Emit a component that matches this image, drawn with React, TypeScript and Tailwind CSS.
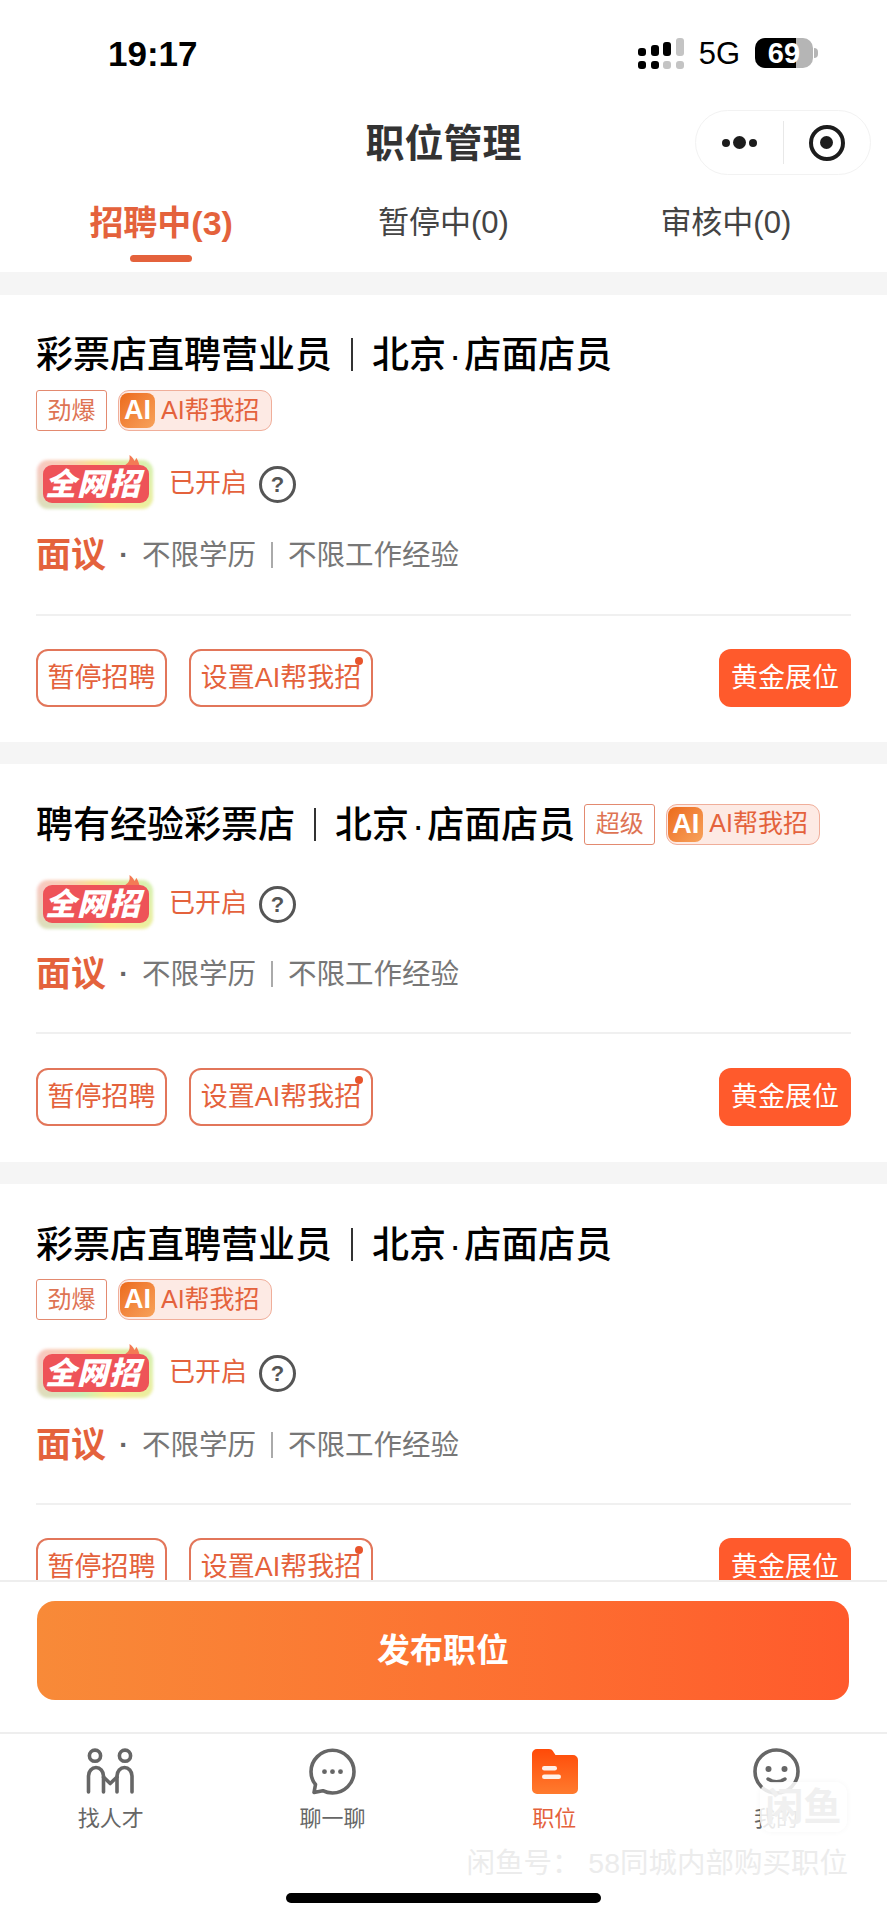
import React from 'react';

const Tag: React.FC<{ text: string }> = ({ text }) => (
    <span className="flex h-[41px] w-[71px] items-center justify-center rounded-[3px] border-[1.5px] border-[#e38a70] bg-white text-[24px] text-[#de7454]">{text}</span>
);

const AiTag: React.FC = () => (
    <span className="flex h-[41px] w-[154px] items-center rounded-[11px] border-[1.5px] border-[#f0ae9a] bg-[#fdeae4] pl-[1px]">
        <span className="flex h-[35px] w-[35px] items-center justify-center rounded-[8px] bg-gradient-to-br from-[#ec6a18] to-[#f7a25a] text-[27px] leading-none font-bold text-white">AI</span>
        <span className="ml-[6px] text-[25px] whitespace-nowrap text-[#e4623c]">AI帮我招</span>
    </span>
);

const QuanWang: React.FC = () => (
    <div className="relative h-[52px] w-[117px] shrink-0">
        <div className="absolute top-[5px] left-[1px] h-[49px] w-[116px] rounded-[11px] bg-[conic-gradient(#fbe08e,#d7f0b0,#fdec8f,#c9efb8,#f8c8c0,#fbe08e)] blur-[1.5px]"></div>
        <svg className="absolute top-0 left-[84px]" width="24" height="14" viewBox="0 0 24 14">
            <path d="M0 14C4 10 8 9 9 6c1-2 .5-4 .5-6 3 2 4 4 5 6 1-1 1-2 2-3 2 3 3 7 4 11z" fill="#f47a55" />
        </svg>
        <div className="absolute top-[10px] left-[7px] flex h-[38px] w-[106px] items-center justify-center rounded-[9px] bg-[#ee5358] pr-[6px] text-[31px] leading-none font-black tracking-[1px] text-white italic">全网招</div>
    </div>
);

const Help: React.FC = () => (
    <span className="mt-[7px] ml-[12px] flex h-[37px] w-[37px] items-center justify-center rounded-full border-[3px] border-[#555555] text-[22px] leading-none font-bold text-[#555555]">?</span>
);

type Job = {
    title: string;
    tag: string;
    inline: boolean;
    pad: string;
    tagGap: string;
    rowGap: string;
    salaryGap: string;
    lineGap: string;
    btnGap: string;
};

const jobs: Job[] = [
    { title: '彩票店直聘营业员', tag: '劲爆', inline: false, pad: 'pt-[37px] pb-[35px]', tagGap: 'mt-[14px]', rowGap: 'mt-[24px]', salaryGap: 'mt-[26px]', lineGap: 'mt-[37px]', btnGap: 'mt-[33px]' },
    { title: '聘有经验彩票店', tag: '超级', inline: true, pad: 'pt-[38px] pb-[36px]', tagGap: '', rowGap: 'mt-[29px]', salaryGap: 'mt-[25px]', lineGap: 'mt-[36px]', btnGap: 'mt-[34px]' },
    { title: '彩票店直聘营业员', tag: '劲爆', inline: false, pad: 'pt-[38px] pb-[35px]', tagGap: 'mt-[13px]', rowGap: 'mt-[24px]', salaryGap: 'mt-[27px]', lineGap: 'mt-[36px]', btnGap: 'mt-[33px]' },
];

const JobCard: React.FC<{ job: Job }> = ({ job }) => (
    <div className={`bg-white px-[36px] ${job.pad}`}>
        <div className="flex h-[44px] items-center">
            <span className="pt-[2px] text-[37px] leading-none font-medium whitespace-nowrap text-black">{job.title}</span>
            <span className="mx-[19px] h-[33px] w-[2px] bg-[#333333]"></span>
            <span className="pt-[2px] text-[37px] leading-none font-medium whitespace-nowrap text-black">北京<span className="mx-[3px]">·</span>店面店员</span>
            {job.inline && (
                <div className="ml-[9px] flex items-center gap-[11px]">
                    <Tag text={job.tag} />
                    <AiTag />
                </div>
            )}
        </div>
        {!job.inline && (
            <div className={`flex items-center gap-[11px] ${job.tagGap}`}>
                <Tag text={job.tag} />
                <AiTag />
            </div>
        )}
        <div className={`flex h-[52px] items-center ${job.rowGap}`}>
            <QuanWang />
            <span className="mt-[4px] ml-[16px] text-[26px] text-[#e4623c]">已开启</span>
            <Help />
        </div>
        <div className={`flex h-[44px] items-center ${job.salaryGap}`}>
            <span className="text-[35px] font-bold text-[#e4623c]">面议</span>
            <span className="w-[36px] text-center text-[28px] font-bold text-[#666666]">·</span>
            <span className="text-[28.5px] text-[#777777]">不限学历</span>
            <span className="mx-[15px] h-[26px] w-[2px] bg-[#aaaaaa]"></span>
            <span className="text-[28.5px] text-[#777777]">不限工作经验</span>
        </div>
        <div className={`h-[2px] bg-[#f0f0f0] ${job.lineGap}`}></div>
        <div className={`flex items-center justify-between ${job.btnGap}`}>
            <div className="flex gap-[22px]">
                <button className="flex h-[58px] w-[131px] items-center justify-center rounded-[12px] border-2 border-[#e2765a] text-[27px] whitespace-nowrap text-[#e4623c]">暂停招聘</button>
                <button className="relative flex h-[58px] w-[184px] items-center justify-center rounded-[12px] border-2 border-[#e2765a] text-[27px] whitespace-nowrap text-[#e4623c]">
                    设置AI帮我招
                    <span className="absolute top-[6px] right-[8px] h-[8px] w-[8px] rounded-full bg-[#e8542c]"></span>
                </button>
            </div>
            <button className="flex h-[58px] w-[132px] items-center justify-center rounded-[12px] bg-[#ff5a2c] text-[27px] whitespace-nowrap text-white">黄金展位</button>
        </div>
    </div>
);

const PeopleIcon = () => (
    <svg width="49" height="47" viewBox="0 0 49 47" fill="none" stroke="#666666" strokeWidth="3.6" strokeLinecap="round" strokeLinejoin="round">
        <circle cx="9" cy="7.7" r="5.6" />
        <circle cx="39" cy="7.7" r="5.6" />
        <path d="M2.500 44V28a7.500 8.500 0 0 1 15 0v16" />
        <path d="M31 44V28a7.500 8.500 0 0 1 15 0v16" />
        <path d="M17.500 29l6.700 6.500L31 29" />
    </svg>
);

const ChatIcon = () => (
    <svg width="47" height="47" viewBox="0 0 47 47" fill="none">
        <path d="M6.500 36.500C3.500 33 2 28.500 2 23.700 2 12 11.700 2.300 23.500 2.300S45 12 45 23.700 35.300 45 23.500 45c-3.500 0-6.800-.8-9.700-2.300L5 44.500z" stroke="#666666" strokeWidth="3.600" strokeLinejoin="round" />
        <circle cx="15.500" cy="23.700" r="2.400" fill="#666666" />
        <circle cx="23.500" cy="23.700" r="2.400" fill="#666666" />
        <circle cx="31.500" cy="23.700" r="2.400" fill="#666666" />
    </svg>
);

const FolderIcon = () => (
    <svg width="47" height="47" viewBox="0 0 47 47">
        <defs>
            <linearGradient id="folder" x1="0" y1="0" x2="0" y2="1">
                <stop offset="0" stopColor="#ff4a08" />
                <stop offset="1" stopColor="#ff7b2e" />
            </linearGradient>
        </defs>
        <path d="M1 6a5 5 0 0 1 5-5h12c2 0 3 .8 4 2.200l2.500 3.800h17.500a5 5 0 0 1 5 5v29a5 5 0 0 1-5 5H6a5 5 0 0 1-5-5z" fill="url(#folder)" />
        <rect x="11" y="18" width="15" height="4.500" rx="2.200" fill="#ffffff" fillOpacity="0.9" />
        <rect x="11" y="26.500" width="19" height="4.500" rx="2.200" fill="#ffffff" fillOpacity="0.9" />
    </svg>
);

const SmileIcon = () => (
    <svg width="47" height="47" viewBox="0 0 47 47" fill="none">
        <circle cx="23.500" cy="23.500" r="21.500" stroke="#666666" strokeWidth="3.600" />
        <circle cx="15.500" cy="21" r="3" fill="#666666" />
        <circle cx="31.500" cy="21" r="3" fill="#666666" />
        <path d="M15 31c5 3.500 12 3.500 17 0" stroke="#666666" strokeWidth="3.400" strokeLinecap="round" />
    </svg>
);

const Signal = () => (
    <svg width="46" height="31" viewBox="0 0 46 31">
        <rect x="0" y="10" width="8" height="8" rx="3" fill="#000000" />
        <rect x="13" y="7" width="8" height="11" rx="3" fill="#000000" />
        <rect x="25" y="4" width="8" height="14" rx="3" fill="#000000" />
        <rect x="38" y="0" width="8" height="18" rx="3" fill="#c4c4c4" />
        <rect x="0" y="23" width="8" height="8" rx="3" fill="#000000" />
        <rect x="13" y="23" width="8" height="8" rx="3" fill="#000000" />
        <rect x="25" y="23" width="8" height="8" rx="3" fill="#c4c4c4" />
        <rect x="38" y="23" width="8" height="8" rx="3" fill="#c4c4c4" />
    </svg>
);

const tabs = [
    { label: '找人才', icon: <PeopleIcon />, active: false },
    { label: '聊一聊', icon: <ChatIcon />, active: false },
    { label: '职位', icon: <FolderIcon />, active: true },
    { label: '我的', icon: <SmileIcon />, active: false },
];

export default function App() {
    return (
        <div className="relative flex h-[1920px] w-[887px] flex-col overflow-hidden bg-white font-['Liberation_Sans','Noto_Sans_CJK_SC',sans-serif]">
            {/* status bar */}
            <div className="flex h-[106px] shrink-0 items-center justify-between pr-[69px] pl-[108px]">
                <span className="text-[35px] leading-none font-bold text-black">19:17</span>
                <div className="flex items-center">
                    <Signal />
                    <span className="ml-[15px] text-[31px] leading-none text-black">5G</span>
                    <div className="relative ml-[15px] flex h-[30px] w-[58px] items-center justify-center overflow-hidden rounded-[10px] bg-[#b5b5b5]">
                        <div className="absolute inset-y-0 left-0 w-[41px] bg-black"></div>
                        <span className="relative text-[29px] leading-none font-bold text-white">69</span>
                    </div>
                    <span className="ml-[1px] h-[10px] w-[4px] rounded-r-full bg-[#b5b5b5]"></span>
                </div>
            </div>

            {/* title */}
            <div className="relative flex h-[70px] shrink-0 items-center justify-center pt-[4px]">
                <span className="text-[39px] leading-none font-bold text-[#333333]">职位管理</span>
                <div className="absolute top-[4px] right-[16px] flex h-[65px] w-[176px] items-center rounded-full border border-[#f2f2f2] bg-white">
                    <div className="flex flex-1 items-center justify-center gap-[3px]">
                        <span className="h-[8px] w-[8px] rounded-full bg-[#1c1c1c]"></span>
                        <span className="h-[13px] w-[13px] rounded-full bg-[#1c1c1c]"></span>
                        <span className="h-[8px] w-[8px] rounded-full bg-[#1c1c1c]"></span>
                    </div>
                    <span className="h-[43px] w-px bg-[#e8e8e8]"></span>
                    <div className="flex flex-1 items-center justify-center">
                        <span className="flex h-[36px] w-[36px] items-center justify-center rounded-full border-[4px] border-[#1c1c1c]">
                            <span className="h-[13px] w-[13px] rounded-full bg-[#1c1c1c]"></span>
                        </span>
                    </div>
                </div>
            </div>

            {/* tabs */}
            <div className="grid h-[96px] shrink-0 grid-cols-3 px-[20px] pt-[25px]">
                <div className="flex flex-col items-center">
                    <span className="text-[34px] leading-[44px] font-bold text-[#e4623c]">招聘中(3)</span>
                    <span className="mt-[10px] h-[7px] w-[62px] rounded-full bg-[#e4623c]"></span>
                </div>
                <div className="flex flex-col items-center">
                    <span className="text-[31px] leading-[44px] text-[#444444]">暂停中(0)</span>
                </div>
                <div className="flex flex-col items-center">
                    <span className="text-[31px] leading-[44px] text-[#444444]">审核中(0)</span>
                </div>
            </div>

            {/* job list */}
            <div className="flex min-h-0 flex-1 flex-col gap-[22px] overflow-hidden bg-[#f5f5f5] pt-[23px]">
                {jobs.map((job, i) => (
                    <JobCard key={i} job={job} />
                ))}
            </div>

            {/* publish */}
            <div className="h-[152px] shrink-0 border-t-2 border-[#eeeeee] bg-white px-[37px] pt-[19px]">
                <button className="flex h-[99px] w-[812px] items-center justify-center rounded-[18px] bg-gradient-to-r from-[#f88a38] to-[#ff5a2c] text-[33px] font-bold text-white">发布职位</button>
            </div>

            {/* tab bar */}
            <div className="flex h-[188px] shrink-0 flex-col border-t-2 border-[#eeeeee] bg-white">
                <div className="grid grid-cols-4 pt-[14px]">
                    {tabs.map((tab) => (
                        <div key={tab.label} className="flex flex-col items-center">
                            {tab.icon}
                            <span className={`mt-[9px] text-[22px] leading-[30px] ${tab.active ? 'text-[#e4623c]' : 'text-[#666666]'}`}>{tab.label}</span>
                        </div>
                    ))}
                </div>
                <div className="mx-auto mt-auto mb-[17px] h-[10px] w-[315px] rounded-full bg-black"></div>
            </div>

            {/* watermark */}
            <div className="absolute top-[1782px] left-[760px] flex h-[50px] w-[87px] items-center justify-center rounded-[12px] bg-white/85 text-[38px] leading-none font-bold text-[#f0f0f0] shadow-[0_0_6px_rgba(0,0,0,0.04)]">闲鱼</div>
            <div className="absolute top-[1845px] right-[39px] text-[28.5px] leading-[36px] whitespace-nowrap text-[#ececec]">闲鱼号： 58同城内部购买职位</div>
        </div>
    );
}
